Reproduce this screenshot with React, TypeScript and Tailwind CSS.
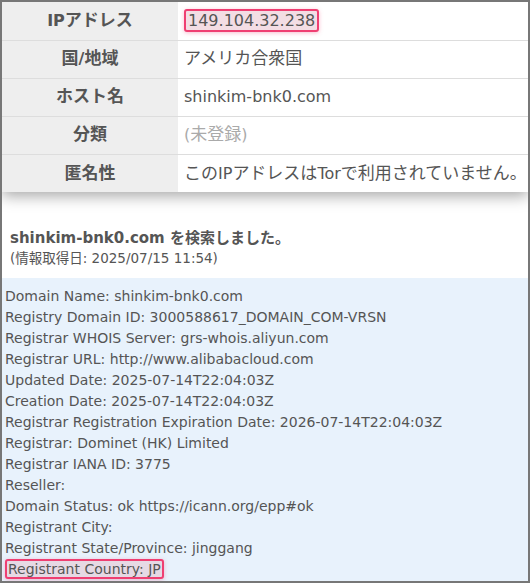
const rows = [
  { label: "IPアドレス", value: "149.104.32.238", mark: true },
  { label: "国/地域", value: "アメリカ合衆国" },
  { label: "ホスト名", value: "shinkim-bnk0.com" },
  { label: "分類", value: "(未登録)", muted: true },
  { label: "匿名性", value: "このIPアドレスはTorで利用されていません。" },
]

const whois = [
  "Domain Name: shinkim-bnk0.com",
  "Registry Domain ID: 3000588617_DOMAIN_COM-VRSN",
  "Registrar WHOIS Server: grs-whois.aliyun.com",
  "Registrar URL: http://www.alibabacloud.com",
  "Updated Date: 2025-07-14T22:04:03Z",
  "Creation Date: 2025-07-14T22:04:03Z",
  "Registrar Registration Expiration Date: 2026-07-14T22:04:03Z",
  "Registrar: Dominet (HK) Limited",
  "Registrar IANA ID: 3775",
  "Reseller:",
  "Domain Status: ok https://icann.org/epp#ok",
  "Registrant City:",
  "Registrant State/Province: jinggang",
]

// japanese glyphs sit a bit larger than the latin ones in the original font
function Jp({ text }: { text: string }) {
  const parts = text.split(/([\u3000-\u30ff\u4e00-\u9fff]+)/)
  return (
    <>
      {parts.map((p, i) =>
        i % 2 === 1 ? (
          <span key={i} className="text-[17px]">
            {p}
          </span>
        ) : (
          p
        )
      )}
    </>
  )
}

export default function App() {
  return (
    <div
      className="flex h-[583px] w-[530px] flex-col overflow-hidden border-2 border-[#777] bg-white text-[#555]"
      style={{ fontFamily: '"DejaVu Sans", "Noto Sans CJK JP", sans-serif' }}
    >
      <table className="w-full border-collapse bg-white shadow-[0_4px_14px_rgba(0,0,0,0.35)]">
        <tbody>
          {rows.map((r, i) => (
            <tr key={r.label} className={i > 0 ? "border-t border-[#ddd]" : ""}>
              <th className="h-[38px] w-[176px] bg-[#eee] text-center text-[16px] font-bold">
                <Jp text={r.label} />
              </th>
              <td className={`h-[38px] pl-[6px] text-[16px] ${r.muted ? "text-[#aaa]" : ""}`}>
                {r.mark ? (
                  <span className="rounded-[3px] border-2 border-[#ef3f72] bg-[#f3dde4] px-[2px] shadow-[0_1px_4px_rgba(239,63,114,0.35)]">
                    {r.value}
                  </span>
                ) : (
                  <Jp text={r.value} />
                )}
              </td>
            </tr>
          ))}
        </tbody>
      </table>

      <div className="px-[8px] pt-[35px] pb-[10px]">
        <div className="text-[15px] font-bold leading-[22px]">shinkim-bnk0.com を検索しました。</div>
        <div className="text-[13.5px] leading-[19px]">(情報取得日: 2025/07/15 11:54)</div>
      </div>

      <div className="flex-1 bg-[#e8f2fc] px-[3px] pt-[8px] text-[14px] leading-[21px]">
        {whois.map((l) => (
          <div key={l}>{l}</div>
        ))}
        <div>
          <span className="rounded-[3px] border-2 border-[#ef3f72] bg-[#e6d9e4] px-[1px] shadow-[0_1px_4px_rgba(239,63,114,0.35)]">
            Registrant Country: JP
          </span>
        </div>
      </div>
    </div>
  )
}
